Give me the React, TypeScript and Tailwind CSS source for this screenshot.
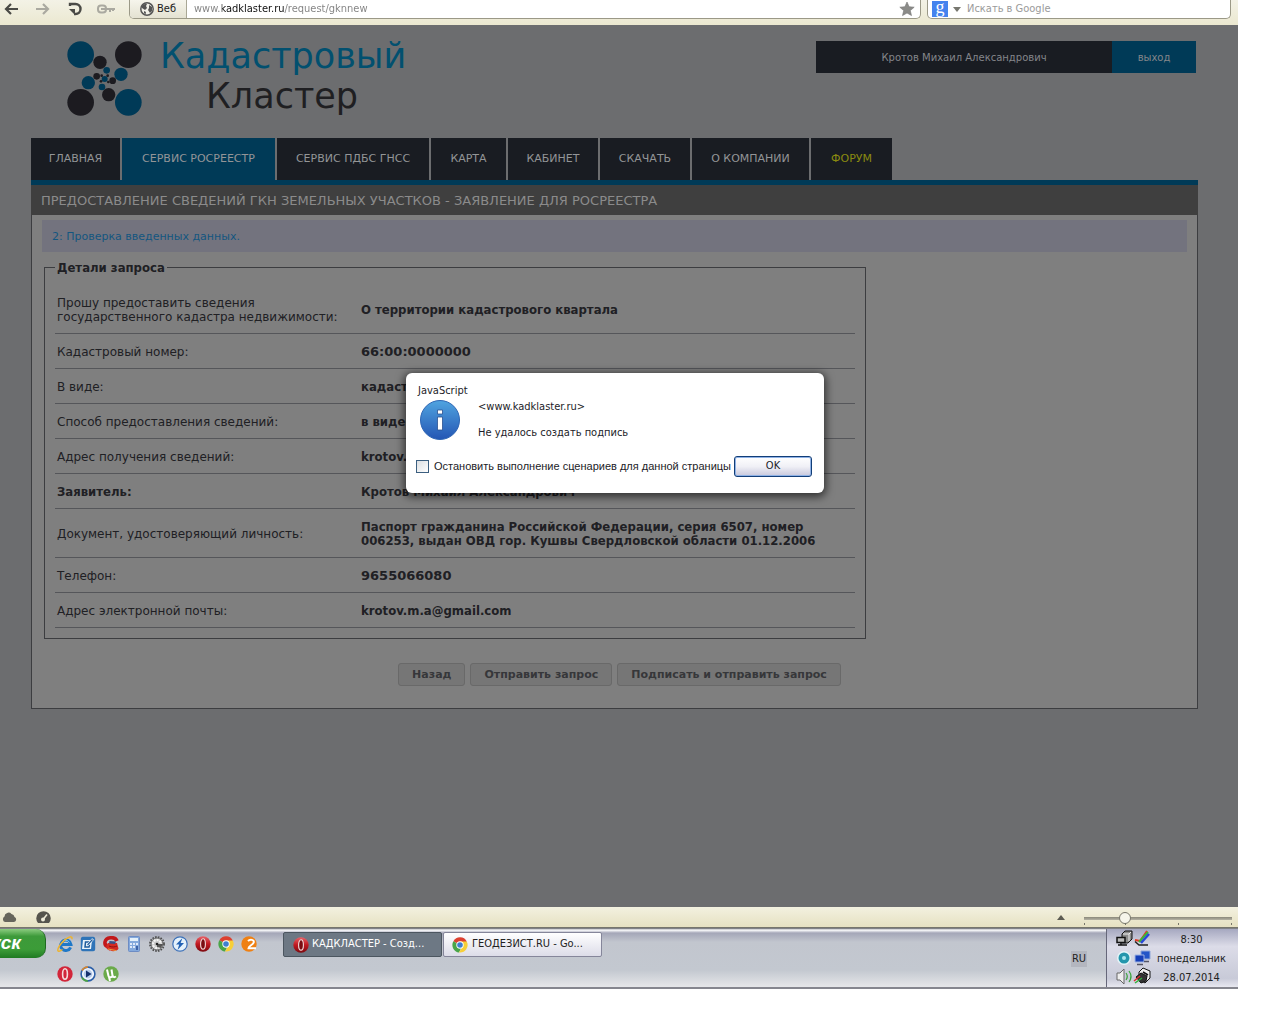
import React, { useState } from 'react';
import clsx from 'clsx';

const navItems = [
  { label: 'Главная', width: 'w-[89px]' },
  { label: 'Сервис Росреестр', width: 'w-[153px]', active: true },
  { label: 'Сервис ПДБС ГНСС', width: 'w-[152px]' },
  { label: 'Карта', width: 'w-[75px]' },
  { label: 'Кабинет', width: 'w-[90px]' },
  { label: 'Скачать', width: 'w-[90px]' },
  { label: 'О компании', width: 'w-[117px]' },
  { label: 'Форум', width: 'w-[81px]', highlight: true },
];

const details = [
  { label: 'Прошу предоставить сведения государственного кадастра недвижимости:', value: 'О территории кадастрового квартала' },
  { label: 'Кадастровый номер:', value: '66:00:0000000', numeric: true },
  { label: 'В виде:', value: 'кадастрового плана территории' },
  { label: 'Способ предоставления сведений:', value: 'в виде электронного документа' },
  { label: 'Адрес получения сведений:', value: 'krotov.m.a@gmail.com' },
  { label: 'Заявитель:', value: 'Кротов Михаил Александрович', strong: true },
  { label: 'Документ, удостоверяющий личность:', value: 'Паспорт гражданина Российской Федерации, серия 6507, номер 006253, выдан ОВД гор. Кушвы Свердловской области 01.12.2006' },
  { label: 'Телефон:', value: '9655066080', numeric: true },
  { label: 'Адрес электронной почты:', value: 'krotov.m.a@gmail.com' },
];

function Logo() {
  return (
    <svg className="w-[75px] h-[75px] shrink-0" viewBox="201 123 225 225" aria-hidden="true">
      <g fill="#003a57">
        <circle cx="242" cy="164" r="40" />
        <circle cx="385" cy="307" r="40" />
        <circle cx="363" cy="223" r="20" />
        <circle cx="265" cy="248" r="20" />
        <circle cx="320" cy="211" r="10" />
        <circle cx="306" cy="261" r="10" />
        <circle cx="314" cy="237" r="9" />
      </g>
      <g fill="#1c1b20">
        <circle cx="385" cy="164" r="40" />
        <circle cx="242" cy="307" r="40" />
        <circle cx="300" cy="187" r="20" />
        <circle cx="326" cy="284" r="20" />
        <circle cx="290" cy="229" r="10" />
        <circle cx="338" cy="242" r="10" />
        <circle cx="305" cy="227" r="4" />
        <circle cx="323" cy="227" r="4" />
        <circle cx="303" cy="244" r="4" />
        <circle cx="325" cy="246" r="4" />
      </g>
    </svg>
  );
}

function OperaIcon({ flat = false }: { flat?: boolean }) {
  return (
    <svg className="w-4 h-4 shrink-0" viewBox="0 0 16 16" aria-hidden="true">
      <defs>
        <linearGradient id="opera" x1="0" y1="0" x2="0" y2="1">
          <stop offset="0" stopColor="#e8646a" />
          <stop offset="0.5" stopColor="#c01820" />
          <stop offset="1" stopColor="#7c0a10" />
        </linearGradient>
      </defs>
      <ellipse cx="8" cy="8" rx="7.7" ry="7.8" fill={flat ? '#d2263a' : 'url(#opera)'} />
      <ellipse cx="8" cy="8" rx="2.4" ry="5.2" fill={flat ? '#d2263a' : '#7a0d12'} stroke="#f3dcdc" strokeWidth={flat ? 1.6 : 1.1} />
    </svg>
  );
}

function ChromeIcon() {
  return (
    <svg className="w-4 h-4 shrink-0" viewBox="0 0 16 16" aria-hidden="true">
      <path d="M8 8 1.4 4.2A7.6 7.6 0 0 1 14.8 4.5Z" fill="#dd4030" />
      <path d="M8 8 1.3 4.3A7.6 7.6 0 0 0 7 15.5L10 9Z" fill="#4aa548" />
      <path d="M8 4.4h6.7A7.6 7.6 0 0 1 7 15.5L10.8 9Z" fill="#f7cf38" />
      <circle cx="8" cy="8" r="3.7" fill="#fff" />
      <circle cx="8" cy="8" r="2.8" fill="#3f7fd0" />
    </svg>
  );
}

function IeIcon() {
  return (
    <svg className="w-4 h-4 shrink-0" viewBox="0 0 16 16" aria-hidden="true">
      <path d="M13.6 11.4A5.2 5.2 0 1 1 14 8.6H5" fill="none" stroke="#1f78c8" strokeWidth="3" />
      <path d="M12.5 6.5A4.5 4.5 0 0 0 5 6" fill="none" stroke="#7cc4f0" />
      <path d="M5.5 13.5C3 15.5 1 15.8.8 14.5.5 11 7 3 12 1.2c2.5-.9 3.5 0 2.8 2" fill="none" stroke="#edb432" strokeWidth="1.5" />
    </svg>
  );
}

function DesktopIcon() {
  return (
    <svg className="w-4 h-4 shrink-0" viewBox="0 0 16 16" aria-hidden="true">
      <path d="M2.5.8h11a2 2 0 0 1 1.7 2v10.4a2 2 0 0 1-2 2H2.500a2 2 0 0 1-1.7-2V2.800a2 2 0 0 1 1.7-2Z" fill="#2f74b8" />
      <path d="M3 4h9l-1 9H2Z" fill="#e8f2fa" />
      <path d="M9.500 6H5.500L5 11h4l.5-2.5" fill="none" stroke="#1f5c9c" strokeWidth="1.5" />
      <path d="m7.5 9 5.5-6" stroke="#fff" strokeWidth="2.4" />
      <path d="m7.5 9 5-5.5" stroke="#1f5c9c" strokeWidth="1.2" />
    </svg>
  );
}

function CcleanerIcon() {
  return (
    <svg className="w-4 h-4 shrink-0" viewBox="0 0 16 16" aria-hidden="true">
      <path d="M14 5C12 0 3 1 2 6c-.6 4.5 4 6 9 5" fill="none" stroke="#c2181b" strokeWidth="3.6" />
      <path d="M5 7h9l1.5 5.5c-1 3-7 3.5-10 1.5C3 12.5 2.5 10 5 7Z" fill="#d52a22" />
      <path d="M6.5 5 13 5.5l-1 2.5-6-.5Z" fill="#3a4f86" />
      <path d="M6 10c3 1.5 6 1 8 0" fill="none" stroke="#8e1010" />
      <path d="m5 13 8 1.5" stroke="#e8a040" />
    </svg>
  );
}

function CalculatorIcon() {
  return (
    <svg className="w-4 h-4 shrink-0" viewBox="0 0 16 16" aria-hidden="true">
      <rect x="2.5" y="0.5" width="11" height="15" rx="1" fill="#84a9dc" stroke="#6d8cc4" />
      <rect x="4" y="2" width="8" height="3" fill="#e4f0fa" />
      <g fill="#dfe9fa">
        <rect x="4" y="7" width="2" height="2" />
        <rect x="7" y="7" width="2" height="2" />
        <rect x="10" y="7" width="2" height="2" />
        <rect x="4" y="10" width="2" height="2" />
        <rect x="7" y="10" width="2" height="2" />
        <rect x="10" y="10" width="2" height="4" fill="#3d62a8" />
      </g>
    </svg>
  );
}

function GearIcon() {
  return (
    <svg className="w-4 h-4 shrink-0" viewBox="0 0 16 16" aria-hidden="true">
      <circle cx="8" cy="8" r="7" fill="none" stroke="#4a4a4a" strokeWidth="1.8" strokeDasharray="1.6 1.2" />
      <circle cx="8" cy="8" r="6" fill="#c9c9c9" stroke="#6a6a6a" />
      <circle cx="8" cy="8" r="4" fill="none" stroke="#f4f4f4" strokeWidth="2" strokeDasharray="2 1" />
      <path d="M8 8h6l-2 4-4-1Z" fill="#555" />
      <circle cx="8" cy="8" r="1.3" fill="#222" />
    </svg>
  );
}

function BoltIcon() {
  return (
    <svg className="w-4 h-4 shrink-0" viewBox="0 0 16 16" aria-hidden="true">
      <circle cx="8" cy="8" r="7.2" fill="#e4f1fb" stroke="#3c70b8" strokeWidth="1.2" />
      <path d="M10.5 2 4 8.600h3.2L5.5 14 12 7H8.600Z" fill="#2161b4" />
    </svg>
  );
}

function TwoIcon() {
  return (
    <svg className="w-4 h-4 shrink-0" viewBox="0 0 16 16" aria-hidden="true">
      <circle cx="8" cy="8" r="7.7" fill="#ef8013" />
      <path d="M7 5c2-2 6.5-1.5 5.7 1.5C12 9 7.5 9.8 7.5 12.300H15" fill="none" stroke="#fff" strokeWidth="2" />
    </svg>
  );
}

function PlayerIcon() {
  return (
    <svg className="w-4 h-4 shrink-0" viewBox="0 0 16 16" aria-hidden="true">
      <circle cx="8" cy="8" r="6.9" fill="#f4f8ff" stroke="#2c5fa8" strokeWidth="1.6" />
      <path d="M2 4.500A7 7 0 0 1 8 1" fill="none" stroke="#e08a2a" strokeWidth="1.6" />
      <path d="M2 11.500A7 7 0 0 0 8 15" fill="none" stroke="#4da344" strokeWidth="1.6" />
      <circle cx="8" cy="8" r="4.4" fill="#b9cdea" />
      <path d="m6 4.6 5.6 3.4L6 11.400Z" fill="#14306e" />
    </svg>
  );
}

function TorrentIcon() {
  return (
    <svg className="w-4 h-4 shrink-0" viewBox="0 0 16 16" aria-hidden="true">
      <circle cx="8" cy="8" r="7.7" fill="#6aaa4a" />
      <path d="M4 3.5 5.5 10c.5 2 4 1.5 4-.5L8.500 3.500M9.500 9.500c.5 2 2 2 3.5 1M6 11l1 4" fill="none" stroke="#fff" strokeWidth="2" />
    </svg>
  );
}

function BrowserBar() {
  const [url, setUrl] = useState('www.kadklaster.ru/request/gknnew');

  return (
    <div className="flex h-[25px] shrink-0 items-start bg-[linear-gradient(#f3f2e6,#ebe8d0)] text-[11px]">
      <div className="flex h-[18px] w-[129px] shrink-0 items-center gap-[15px] pl-1">
        <button aria-label="Назад">
          <svg className="w-[14px] h-[14px]" viewBox="0 0 14 14" fill="none" stroke="#4a4a46" strokeWidth="2.2">
            <path d="M14 7H2M7 2 2 7l5 5" />
          </svg>
        </button>
        <button aria-label="Вперёд" className="ml-[3px]">
          <svg className="w-[14px] h-[14px]" viewBox="0 0 14 14" fill="none" stroke="#aaa9a0" strokeWidth="2.2">
            <path d="M0 7h12M7 2l5 5-5 5" />
          </svg>
        </button>
        <button aria-label="Обновить" className="ml-[3px]">
          <svg className="w-[14px] h-[14px]" viewBox="0 0 14 14" fill="none" stroke="#4a4a46" strokeWidth="2.4">
            <path d="M2 4V2h5.500a5 5 0 0 1 0 10H6" />
            <path d="M1 7h6v6Z" fill="#4a4a46" stroke="none" />
          </svg>
        </button>
        <button aria-label="Ключ">
          <svg className="w-[19px] h-[10px]" viewBox="0 0 19 10" fill="none" stroke="#aaa9a0" strokeWidth="2">
            <rect x="1" y="1.5" width="8" height="7" rx="3" />
            <path d="M4 5h14M13 5v3M16 5v2" />
          </svg>
        </button>
      </div>
      <div className="flex h-[19px] flex-1 items-stretch overflow-hidden rounded-b-[5px] border border-t-0 border-[#9b9987] bg-white">
        <button className="flex w-[57px] shrink-0 items-center gap-[3px] border-r border-[#a9a795] bg-[linear-gradient(#f6f5ec,#e4e2d2)] pl-[10px] text-[#222]">
          <svg className="w-[14px] h-[14px]" viewBox="0 0 14 14" aria-hidden="true">
            <circle cx="7" cy="7" r="6.2" fill="#f1f0e8" stroke="#555" strokeWidth="1.5" />
            <path d="M2 4c2-2 4-2.5 5-2l-1 2 1 2-2 2-1.5-1L2 6ZM9 3l3 2v4l-2 2-2-3 1-2ZM4 9l2 1-.5 2.5L4 11Z" fill="#555" />
          </svg>
          Веб
        </button>
        <input
          aria-label="Адрес страницы"
          value={url}
          onChange={e => setUrl(e.target.value)}
          className="min-w-0 flex-1 bg-[linear-gradient(90deg,#808080_35px,#101010_35px,#101010_97px,#808080_97px)] bg-clip-text pl-[7px] text-transparent outline-none"
        />
        <button aria-label="В закладки" className="pr-[5px]">
          <svg className="w-4 h-4" viewBox="0 0 16 16" aria-hidden="true">
            <path d="m8 1 2.1 4.7 5.1.5-3.9 3.4 1.2 5L8 12l-4.5 2.6 1.2-5L.8 6.2l5.1-.5Z" fill="#8b8b88" stroke="#777" strokeWidth=".6" />
          </svg>
        </button>
      </div>
      <div className="mr-[7px] ml-[6px] flex h-[19px] w-[304px] shrink-0 items-center rounded-b-[5px] border border-t-0 border-[#9b9987] bg-white pl-1">
        <span className="flex h-4 w-4 items-center justify-center bg-[#4583ee] pb-1 font-['Liberation_Serif',serif] text-[18px] leading-none text-white">g</span>
        <svg className="mx-[5px] w-[8px] h-[5px]" viewBox="0 0 8 5" aria-hidden="true">
          <path d="M0 0h8L4 5Z" fill="#77776f" />
        </svg>
        <input aria-label="Поиск" placeholder="Искать в Google" className="ml-px min-w-0 flex-1 outline-none placeholder:text-[#9a9a9a]" />
      </div>
    </div>
  );
}

function Header() {
  return (
    <header className="flex items-start justify-between pr-[2px] pl-9">
      <div className="flex items-start gap-[18px]">
        <Logo />
        <h1 className="-mt-[5px] text-[35px] leading-10">
          <span className="block text-[#02506f]">Кадастровый</span>
          <span className="block pl-[46px] text-[#1f1f22]">Кластер</span>
        </h1>
      </div>
      <div className="flex h-8 text-[10px] text-[#84868a]">
        <div className="flex w-[296px] items-center justify-center bg-[#191c22]">Кротов Михаил Александрович</div>
        <a href="#logout" className="flex w-[84px] items-center justify-center bg-[#003a57]">выход</a>
      </div>
    </header>
  );
}

function AlertDialog() {
  return (
    <div className="absolute inset-0 flex items-start justify-center pt-[348px] pr-2">
      <div
        role="alertdialog"
        aria-label="JavaScript"
        className="flex h-[120px] w-[418px] flex-col rounded-md bg-white px-[10px] pt-[10px] font-['DejaVu_Sans_Condensed','DejaVu_Sans',sans-serif] text-[11px] text-[#1c1c28] shadow-[0_2px_8px_2px_rgba(0,0,0,0.6)]"
      >
        <p className="pl-[2px] leading-4">JavaScript</p>
        <div className="flex gap-[18px] pl-1">
          <svg className="w-10 h-10 mt-px shrink-0" viewBox="0 0 40 40" aria-hidden="true">
            <defs>
              <linearGradient id="info" x1="0" y1="0" x2="0" y2="1">
                <stop offset="0" stopColor="#50a4e0" />
                <stop offset="1" stopColor="#2456b4" />
              </linearGradient>
            </defs>
            <circle cx="20" cy="20" r="19.5" fill="url(#info)" stroke="#2f66b4" />
            <path d="M17.5 10h5v4h-5ZM17.5 17h5v13h-5Z" fill="#fff" stroke="#2a5090" strokeWidth=".8" />
          </svg>
          <div className="flex flex-col gap-[10px] leading-4">
            <p>&lt;www.kadklaster.ru&gt;</p>
            <p>Не удалось создать подпись</p>
          </div>
        </div>
        <div className="mt-[15px] flex items-center justify-between pr-[2px]">
          <label className="flex items-center gap-[5px] font-['Liberation_Sans',sans-serif] whitespace-nowrap">
            <input type="checkbox" className="h-[13px] w-[13px] appearance-none border border-[#3c5f80] bg-[linear-gradient(135deg,#dcdfe2,#fff)] checked:bg-[#3c5f80]" />
            Остановить выполнение сценариев для данной страницы
          </label>
          <button className="h-[21px] w-[78px] shrink-0 rounded-[3px] border border-[#123e78] bg-[linear-gradient(#fff,#f0f0f6_50%,#c8c8dc)] shadow-[inset_0_0_0_1px_#8fb2e6]">OK</button>
        </div>
      </div>
    </div>
  );
}

function StatusBar() {
  return (
    <div className="flex h-[21px] shrink-0 items-center border-b border-[#77766c] bg-[linear-gradient(#f3f1e0,#e6e1c2)]">
      <svg className="w-[15px] h-[12px] ml-[2px]" viewBox="0 0 15 12" fill="#66655c" aria-hidden="true">
        <path d="M3 11a3 3 0 0 1-.5-5.5A4 4 0 0 1 9.5 3 3.5 3.5 0 0 1 12.5 6 2.6 2.6 0 0 1 12 11Z" />
      </svg>
      <svg className="w-[15px] h-[12px] ml-[19px]" viewBox="0 0 15 12" aria-hidden="true">
        <path d="M2 12a7.2 7.2 0 1 1 11 0Z" fill="#55544d" />
        <circle cx="7" cy="8.5" r="2" fill="#eeebd8" />
        <path d="m7 8.5 4-5" stroke="#eeebd8" strokeWidth="1.6" />
      </svg>
      <svg className="w-[8px] h-[5px] ml-auto mr-[19px]" viewBox="0 0 8 5" aria-hidden="true">
        <path d="M0 5h8L4 0Z" fill="#5c5b52" />
      </svg>
      <div className="mr-[6px] flex w-[148px] flex-col pt-[3px]">
        <input
          type="range"
          aria-label="Масштаб"
          min={0}
          max={100}
          defaultValue={26}
          className="h-3 w-full appearance-none bg-[linear-gradient(#8a887a,#b5b3a4)] bg-[length:100%_3px] bg-center bg-no-repeat [&::-webkit-slider-thumb]:h-3 [&::-webkit-slider-thumb]:w-3 [&::-webkit-slider-thumb]:appearance-none [&::-webkit-slider-thumb]:rounded-full [&::-webkit-slider-thumb]:border [&::-webkit-slider-thumb]:border-[#77766a] [&::-webkit-slider-thumb]:bg-[#f6f5ea]"
        />
        <svg className="h-[2px] w-full -mt-px" viewBox="0 0 148 2" preserveAspectRatio="none" aria-hidden="true">
          <path d="M.5 0v2M41.5 0v2M94.5 0v2M147.5 0v2" stroke="#77766a" />
        </svg>
      </div>
    </div>
  );
}

function TrayIcons() {
  return (
    <svg className="w-[36px] h-[56px] shrink-0" viewBox="0 0 36 56" aria-hidden="true">
      <path d="m6 4 3-3h7v8l-4 4H6Z" fill="#8b8b8b" stroke="#111" />
      <path d="M7 4h6l2-2M13 4v7" fill="none" stroke="#eee" />
      <path d="M1 7.5h8v5H1Z" fill="#bbb" stroke="#111" strokeWidth="1.5" />
      <path d="M2 15h9M5 13v2" stroke="#111" strokeWidth="1.5" />
      <path d="m19 10 5 1L31 1" fill="none" stroke="#e33a24" strokeWidth="2" />
      <path d="m23 12 9-10" stroke="#38b838" strokeWidth="2" />
      <path d="m25 13 8-9" stroke="#2848d8" strokeWidth="2.5" />
      <path d="M19 11.5 23 15h9" fill="none" stroke="#222" strokeWidth="1.5" />
      <circle cx="8" cy="28" r="7" fill="#e4f4f8" />
      <circle cx="8" cy="28" r="5.5" fill="#2496ac" />
      <circle cx="8" cy="28" r="2" fill="#a8e6ee" />
      <path d="M25 21h9v8h-9Z" fill="#2456c8" stroke="#8ea6d8" />
      <path d="M19 25h9v7h-9Z" fill="#163fb8" stroke="#9fb4e4" />
      <path d="M21 34.5h6M28 31.5h5" stroke="#556" strokeWidth="1.5" />
      <path d="M1 43h3l4-4v15l-4-4H1Z" fill="#eee" stroke="#666" />
      <path d="M10 43q2.5 3.5 0 7M13 41q4 5.5 0 11" fill="none" stroke="#39a339" strokeWidth="1.2" />
      <path d="m23 42 4-4 7 3v7l-5 5-6-4Z" fill="#eee" stroke="#111" />
      <path d="m20 47 5-4 6 3-1 5-5 2Z" fill="#333" stroke="#111" />
      <path d="m27 42 5 3" stroke="#111" strokeWidth="1.5" />
      <path d="m18 51 6-5" stroke="#d93030" strokeWidth="1.5" />
      <path d="m19 53 7-5" stroke="#2fae3a" strokeWidth="1.5" />
    </svg>
  );
}

function Taskbar() {
  return (
    <footer className="flex h-[61px] shrink-0 items-start border-b-2 border-[#85868e] bg-[linear-gradient(#55565e_0,#fff_2px,#a4a6b8_5px,#c2c6ce_14px,#c3c8d0_42px,#e4e5e8_58px)] font-['DejaVu_Sans_Condensed','DejaVu_Sans',sans-serif] text-[11px] text-[#222]">
      <button className="mt-px flex h-[29px] w-[46px] shrink-0 items-center justify-end overflow-hidden rounded-r-[10px] border-r border-[#1f6a20] bg-[linear-gradient(#8ccc80,#3d9a3a_25%,#3c9c38_70%,#1f7a22)] pr-[24px] font-['Liberation_Sans',sans-serif] text-[19px] font-bold text-white italic">
        пуск
      </button>
      <div className="ml-[11px] flex w-[226px] flex-wrap gap-x-[7px] gap-y-[14px] pt-2 pr-5">
        <IeIcon />
        <DesktopIcon />
        <CcleanerIcon />
        <CalculatorIcon />
        <GearIcon />
        <BoltIcon />
        <OperaIcon />
        <ChromeIcon />
        <TwoIcon />
        <OperaIcon flat />
        <PlayerIcon />
        <TorrentIcon />
      </div>
      <div className="mt-1 flex gap-px">
        <button className="flex h-[25px] w-[159px] items-center gap-[3px] rounded-[2px] border border-[#4c5660] bg-[#6d7884] pl-[9px] text-white">
          <OperaIcon />
          КАДКЛАСТЕР - Созд...
        </button>
        <button className="flex h-[25px] w-[159px] items-center gap-1 rounded-[2px] border border-[#85869a] bg-[linear-gradient(#fff,#dcdce8)] pl-[8px]">
          <ChromeIcon />
          ГЕОДЕЗИСТ.RU - Go...
        </button>
      </div>
      <span className="mt-[23px] mr-[19px] ml-auto bg-[#b3b6bf] px-px leading-4">RU</span>
      <div className="mt-px flex h-[58px] w-[132px] items-center border-l border-[#66677a] bg-[linear-gradient(#a6a8c0,#dcdce8_30%,#c8cad8_85%,#e8e8f0)] pl-[9px]">
        <TrayIcons />
        <div className="flex-1 pr-2 pl-[1px] text-center leading-[19px]">
          <p>8:30</p>
          <p>понедельник</p>
          <p>28.07.2014</p>
        </div>
      </div>
    </footer>
  );
}

export default function App() {
  return (
    <div className="flex min-h-screen flex-col bg-white pr-[42px] pb-[35px] font-['DejaVu_Sans_Condensed','DejaVu_Sans',sans-serif]">
      <BrowserBar />
      <div className="relative flex-1 bg-[#6c6d6f] pt-4 pr-10 pl-[31px] font-['DejaVu_Sans',sans-serif]">
        <Header />
        <nav className="mt-[22px] flex gap-[2px] text-[11px] text-[#939597] uppercase">
          {navItems.map(item => (
            <a
              key={item.label}
              href="#"
              className={clsx(
                'flex h-[42px] items-center justify-center pt-px whitespace-nowrap',
                item.width,
                item.active ? 'bg-[#003a57]' : 'bg-[#191c22]',
                item.highlight && 'text-[#8a8a10]'
              )}
            >
              {item.label}
            </a>
          ))}
        </nav>
        <h2 className="border-t-[5px] border-[#003a57] bg-[#3f3f3f] px-[10px] pt-[2px] text-[13px] leading-[28px] text-[#8b8b8b] uppercase">
          Предоставление сведений ГКН земельных участков - Заявление для Росреестра
        </h2>
        <main className="border border-t-0 border-[#3c3d40] bg-[#7f7f7f] px-[10px] pt-[5px] pb-[22px]">
          <p className="bg-[#73737e] px-[10px] pt-[2px] text-[11px] leading-[30px] text-[#145680]">2: Проверка введенных данных.</p>
          <fieldset className="mt-[7px] ml-[2px] w-[822px] max-w-full border border-[#3c3d40] px-[10px] pb-[10px] leading-[14px] text-[#202024]">
            <legend className="px-[2px] pt-[2px] font-['DejaVu_Sans_Condensed','DejaVu_Sans',sans-serif] text-[13px] leading-[14px] font-bold">Детали запроса</legend>
            <table className="mt-[10px] w-full border-collapse">
              <tbody>
                {details.map(row => (
                  <tr key={row.label} className="border-b border-[#55565a]">
                    <th
                      scope="row"
                      className={clsx(
                        'w-[304px] pt-[11px] pr-2 pb-[9px] pl-[2px] text-left leading-[14px]',
                        row.strong ? "font-['DejaVu_Sans_Condensed','DejaVu_Sans',sans-serif] text-[13px] font-bold" : 'text-[12px] font-normal'
                      )}
                    >
                      {row.label}
                    </th>
                    <td
                      className={clsx(
                        'pt-[11px] pr-2 pb-[9px] pl-[2px] text-[13px] leading-[14px] font-bold',
                        !row.numeric && "font-['DejaVu_Sans_Condensed','DejaVu_Sans',sans-serif]"
                      )}
                    >
                      {row.value}
                    </td>
                  </tr>
                ))}
              </tbody>
            </table>
          </fieldset>
          <div className="mt-6 ml-[10px] flex justify-center gap-[5px] text-[11px] font-bold text-[#36373a]">
            <button className="h-[23px] rounded-[3px] border border-[#696969] bg-[#767676] px-[13px] pt-px">Назад</button>
            <button className="h-[23px] rounded-[3px] border border-[#696969] bg-[#767676] px-[13px] pt-px">Отправить запрос</button>
            <button className="h-[23px] rounded-[3px] border border-[#696969] bg-[#767676] px-[13px] pt-px">Подписать и отправить запрос</button>
          </div>
        </main>
        <AlertDialog />
      </div>
      <StatusBar />
      <Taskbar />
    </div>
  );
}
